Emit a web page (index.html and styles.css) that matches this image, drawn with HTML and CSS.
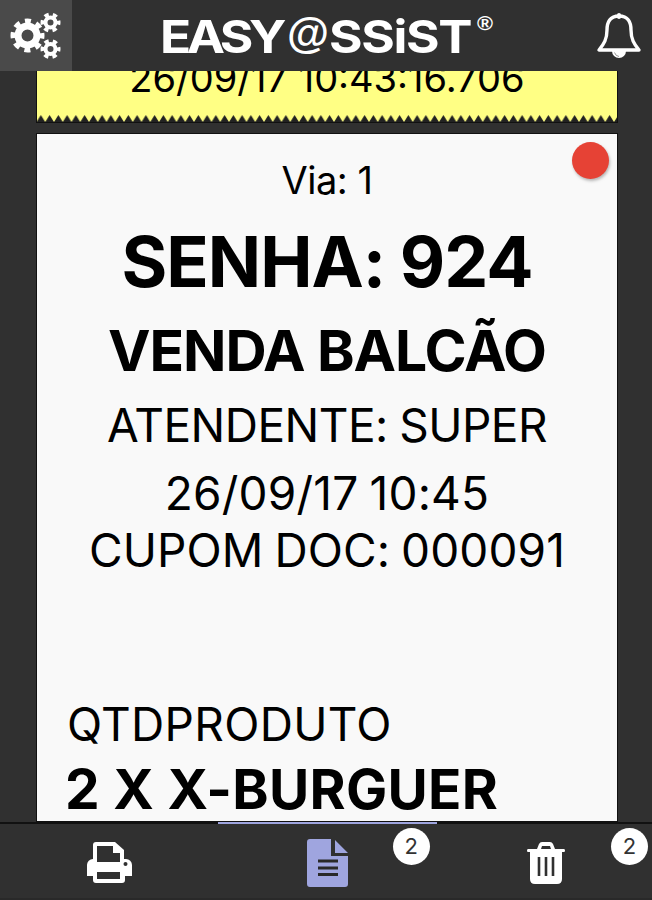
FILE: index.html
```html
<!DOCTYPE html>
<html lang="pt-BR">
<head>
<meta charset="utf-8">
<title>Easy@ssist</title>
<link rel="stylesheet" href="styles.css">
</head>
<body>
<div class="app">
  <header class="topbar">
    <button class="settings" aria-label="Configurações">
      <svg width="72" height="71" viewBox="0 0 72 71" fill="none" stroke="#fff">
        <circle cx="27.500" cy="35.500" r="9.500" stroke-width="7"/>
        <circle cx="27.500" cy="35.500" r="14.500" stroke-width="5" stroke-dasharray="6 5.388" stroke-dashoffset="3"/>
        <circle cx="50.500" cy="22.500" r="5" stroke-width="4"/>
        <circle cx="50.500" cy="22.500" r="8" stroke-width="4" stroke-dasharray="4.300 4.078" stroke-dashoffset="2.150"/>
        <circle cx="50.500" cy="49" r="5" stroke-width="4"/>
        <circle cx="50.500" cy="49" r="8" stroke-width="4" stroke-dasharray="4.300 4.078" stroke-dashoffset="2.150"/>
      </svg>
    </button>
    <svg class="logo" width="340" height="71" viewBox="0 0 340 71">
      <text class="logo-text" transform="translate(3 52.500) scale(1.140 1)" textLength="111" lengthAdjust="spacing">EASY</text>
      <text class="logo-at" x="130" y="48" textLength="42" lengthAdjust="spacingAndGlyphs">@</text>
      <text class="logo-text" transform="translate(172 52.500) scale(1.140 1)" textLength="126" lengthAdjust="spacing">SSiST</text>
      <text class="logo-reg" x="320" y="30" textLength="16" lengthAdjust="spacingAndGlyphs">®</text>
    </svg>
    <svg class="bell" width="46" height="50" viewBox="0 0 46 50">
      <path d="M23 5c-9 0-12 6-12 14 0 9-3 14-8 20h40c-5-6-8-11-8-20 0-8-3-14-12-14Z" fill="none" stroke="#fff" stroke-width="3.400" stroke-linejoin="round"/>
      <path d="M23 4v2" stroke="#fff" stroke-width="4" stroke-linecap="round"/>
      <path d="M16 40h14a7 7 0 0 1-14 0Z" fill="#fff"/>
      <path d="M18.500 41.500q1 3.500 4.500 4" fill="none" stroke="#999" stroke-width="1"/>
    </svg>
  </header>
  <main class="list">
    <section class="ticket previous">
      <p class="line stamp"><span>26/09/17 10:43:16.706</span></p>
      <svg class="zigzag" width="580" height="7">
        <defs><pattern id="teeth" x="-0.500" width="8.750" height="7" patternUnits="userSpaceOnUse"><path d="M0 7 4.375 0 8.750 7Z" fill="#222"/></pattern></defs>
        <rect width="580" height="7" fill="url(#teeth)"/>
      </svg>
    </section>
    <section class="ticket current">
      <i class="status"></i>
      <p class="line via"><span>Via: 1</span></p>
      <p class="line senha"><span>SENHA: 924</span></p>
      <p class="line venda"><span>VENDA BALCÃO</span></p>
      <p class="line atendente"><span>ATENDENTE: SUPER</span></p>
      <p class="line date"><span>26/09/17 10:45</span></p>
      <p class="line cupom"><span>CUPOM DOC: 000091</span></p>
      <p class="line heading"><span>QTDPRODUTO</span></p>
      <p class="line item"><span>2 X X-BURGUER</span></p>
    </section>
  </main>
  <nav class="tabs">
    <a class="tab">
      <svg width="46" height="44" viewBox="0 0 46 44">
        <path fill="#fff" fill-rule="evenodd" d="M10 1h19l9 8v9h2a6 6 0 0 1 6 6v11h-7v4q0 3-3 3H10q-3 0-3-3v-4H1V24a6 6 0 0 1 6-6V4q0-3 3-3Zm1 4v16h23v-9h-7V5ZM11 31v7h23v-7Z"/>
        <circle cx="39.500" cy="23" r="2" fill="#303030"/>
      </svg>
    </a>
    <a class="tab active">
      <svg width="41" height="48" viewBox="0 0 41 48">
        <path fill="#9fa5df" d="M3 0h21v17h17v28q0 3-3 3H3q-3 0-3-3V3q0-3 3-3ZM28 1l13 13H28Z"/>
        <path d="M11 22h20M11 29h20M11 35.500h20" stroke="#292929" stroke-width="3"/>
      </svg>
      <b class="badge">2</b>
    </a>
    <a class="tab">
      <svg width="40" height="44" viewBox="0 0 40 44">
        <path fill="#fff" fill-rule="evenodd" d="M2 8h9l2-5q1-2 3-2h8q2 0 3 2l2 5h9q1 0 1 1.500T38 11h-2v27q0 5-5 5H9q-5 0-5-5V11H2Q1 11 1 9.500T2 8Zm13 0h10l-1-3h-8Z"/>
        <path d="M13 16v19M20 16v19M27 16v19" stroke="#303030" stroke-width="2.600"/>
      </svg>
      <b class="badge">2</b>
    </a>
  </nav>
</div>
</body>
</html>
```
FILE: styles.css
```css
* { box-sizing: border-box; }
body { margin: 0; background: #303030; }
.app { display: flex; flex-direction: column; width: 652px; height: 900px; overflow: hidden; background: #303030; font-family: Inter, "Liberation Sans", sans-serif; color: #000; }
.topbar { display: flex; height: 71px; flex: none; }
.settings { width: 72px; height: 71px; padding: 0; border: 0; background: #4a4a4a; }
.settings svg { display: block; }
.logo { margin-left: 85px; fill: #fff; }
.logo-text { font: 700 45px Inter, sans-serif; }
.logo-at { font: bold 43px "Liberation Sans", sans-serif; }
.logo-reg { font: bold 20px "Liberation Sans", sans-serif; }
.bell { margin: 11px 0 0 99px; }
.list { display: flex; flex-direction: column; gap: 12px; height: 751px; flex: none; padding: 0 35px 0 37px; overflow: hidden; }
.ticket { position: relative; width: 580px; flex: none; }
.previous { height: 51px; background: #ffff84; overflow: hidden; display: flex; flex-direction: column; justify-content: space-between; box-shadow: 0 0 0 1px #111; }
.current { height: 687px; background: #f9f9f9; padding-top: 25px; box-shadow: 0 0 0 1px #111; }
.line { margin: 0; text-align: center; white-space: nowrap; font-weight: 400; }
.stamp { margin-top: -13px; font-size: 38px; line-height: 40px; height: 40px; }
.zigzag { display: block; }
.via { font-size: 38px; line-height: 42px; letter-spacing: -0.5px; }
.senha { margin-top: 16px; font-size: 70px; line-height: 89px; font-weight: 700; letter-spacing: -1px; word-spacing: -1px; }
.venda { font-size: 57px; line-height: 90px; font-weight: 700; letter-spacing: -1.1px; }
.atendente { font-size: 46px; line-height: 59px; letter-spacing: -0.5px; word-spacing: -1px; }
.date { margin-top: 10px; font-size: 46px; line-height: 56px; letter-spacing: 0.2px; word-spacing: -2px; }
.cupom { font-size: 46px; line-height: 58px; letter-spacing: 0.1px; word-spacing: -2px; }
.heading { margin-top: 114px; padding-left: 30px; font-size: 46px; line-height: 62px; text-align: left; letter-spacing: 0.3px; }
.item { margin-top: 5px; padding-left: 28px; font-size: 55px; line-height: 59px; text-align: left; font-weight: 700; letter-spacing: 0.3px; }
.status { position: absolute; top: 8px; right: 8px; width: 37px; height: 37px; border-radius: 50%; background: #e64235; box-shadow: 1px 2px 3px #8889; }
.tabs { display: grid; grid-template-columns: repeat(3, 1fr); width: 655px; height: 78px; border-bottom: 2px solid #292929; }
.tab { position: relative; display: flex; align-items: center; justify-content: center; padding-top: 4px; border-top: 2px solid #111; }
.tab.active { border-top-color: #9fa5df; }
.badge { position: absolute; top: 4px; right: 7px; width: 37px; height: 37px; border-radius: 50%; background: #fff; color: #333; font-size: 22px; line-height: 37px; font-weight: 400; text-align: center; }
```
